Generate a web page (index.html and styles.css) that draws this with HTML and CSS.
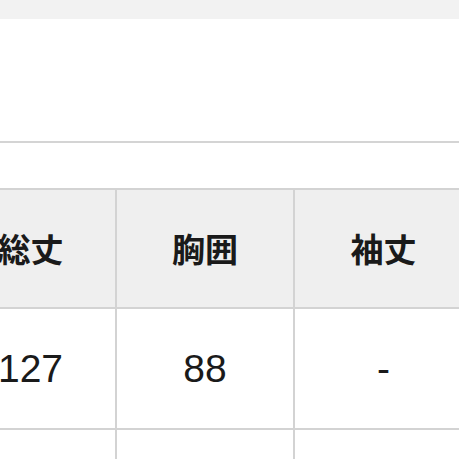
FILE: index.html
```html
<!DOCTYPE html>
<html lang="ja">
<head>
<meta charset="utf-8">
<link rel="stylesheet" href="styles.css">
</head>
<body>
<div class="topbar"></div>
<div class="panel"></div>
<div class="divider"></div>
<div class="gap"></div>
<table class="size-table">
  <colgroup>
    <col class="c1"><col class="c2"><col class="c3">
  </colgroup>
  <thead>
    <tr><th>総丈</th><th>胸囲</th><th>袖丈</th></tr>
  </thead>
  <tbody>
    <tr><td>127</td><td>88</td><td>-</td></tr>
    <tr class="next"><td></td><td></td><td></td></tr>
  </tbody>
</table>
</body>
</html>
```

FILE: styles.css
```css
html, body {
  margin: 0;
  padding: 0;
  background: #ffffff;
  overflow: hidden;
  width: 459px;
  height: 459px;
}
.topbar {
  height: 19px;
  background: #f2f2f2;
}
.panel {
  height: 122px;
  background: #ffffff;
}
.divider {
  height: 2px;
  background: #d4d4d4;
}
.gap {
  height: 45px;
}
.size-table {
  margin-left: -54px;
  width: 528px;
  table-layout: fixed;
  border-collapse: separate;
  border-spacing: 0;
  border-top: 2px solid #d3d3d3;
  font-family: "Liberation Sans", "Noto Sans CJK JP", sans-serif;
  color: #1a1a1a;
}
.c1 { width: 171px; }
.c2 { width: 178px; }
.c3 { width: 179px; }
.size-table th,
.size-table td {
  box-sizing: border-box;
  padding: 0;
  text-align: center;
  vertical-align: middle;
  border-right: 2px solid #d3d3d3;
  border-bottom: 2px solid #d3d3d3;
}
.size-table th {
  height: 119px;
  background: #efefef;
  font-family: "Noto Sans CJK JP", sans-serif;
  font-weight: 700;
  font-size: 33px;
  line-height: 1;
}
.size-table td {
  height: 121px;
  background: #ffffff;
  font-size: 39px;
  font-weight: 400;
  line-height: 1;
}
.size-table .next td {
  height: 60px;
}
```
